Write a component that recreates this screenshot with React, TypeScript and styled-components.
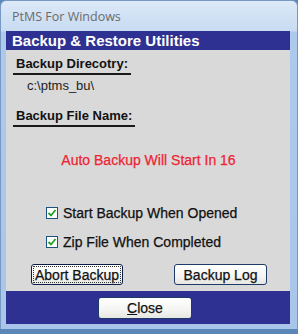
import React from "react";
import styled, { createGlobalStyle } from "styled-components";

const GlobalStyle = createGlobalStyle`
	html, body {
		margin: 0;
		padding: 0;
		background: #5a87b8;
	}
	* {
		box-sizing: border-box;
	}
`;

const Window = styled.div`
	width: 298px;
	height: 329px;
	display: flex;
	flex-direction: column;
	border: 1px solid #7897c2;
	border-bottom: none;
	border-radius: 6px 6px 0 0;
	background: linear-gradient(to bottom, #dce9f8 0px, #c7dbf2 30px, #adc9ec 31px, #a9c6ea 100%);
	overflow: hidden;
	font-family: "Liberation Sans", Arial, sans-serif;
`;

const TitleBar = styled.div`
	height: 30px;
	display: flex;
	align-items: center;
	padding-left: 11px;
	font-family: "Open Sans", "Liberation Sans", sans-serif;
	font-size: 12.5px;
	color: #6b6b6b;
`;

const Client = styled.div`
	flex: 1;
	display: flex;
	flex-direction: column;
	margin: 0 7px 5px 5px;
`;

const Header = styled.div`
	height: 19px;
	background: #2e3192;
	color: #fff;
	font-weight: bold;
	font-size: 15px;
	line-height: 19px;
	padding-left: 6px;
`;

const Body = styled.div`
	height: 241px;
	background: #d9d9d9;
	padding: 6px 0 0 7px;
	display: flex;
	flex-direction: column;
`;

const SectionLabel = styled.div<{ $gap: number }>`
	align-self: flex-start;
	font-size: 13px;
	font-weight: bold;
	line-height: 15px;
	color: #111;
	padding: 0 3px 2px 3px;
	border-bottom: 2px solid #1a1a1a;
	margin-top: ${(p) => p.$gap}px;
`;

const PathText = styled.div`
	font-size: 13px;
	line-height: 15px;
	color: #222;
	padding-left: 14px;
	margin-top: 3px;
`;

const Countdown = styled.div`
	margin-top: 25px;
	text-align: center;
	padding-right: 6px;
	font-size: 14px;
	line-height: 16px;
	color: #ee2433;
	-webkit-text-stroke: 0.25px #ee2433;
`;

const Options = styled.div`
	display: flex;
	flex-direction: column;
	gap: 13px;
	margin-top: 37px;
	padding-left: 33px;
`;

const Option = styled.label`
	display: flex;
	align-items: center;
	gap: 5px;
	font-size: 14px;
	line-height: 16px;
	color: #111;
	-webkit-text-stroke: 0.25px #111;
`;

const Box = styled.span`
	width: 12px;
	height: 12px;
	border: 1px solid #1c5180;
	background: #fff;
	display: flex;
	align-items: center;
	justify-content: center;
`;

const ButtonRow = styled.div`
	display: flex;
	justify-content: space-between;
	margin-top: 14px;
	padding: 0 23px 0 18px;
`;

const Button = styled.button<{ $focused?: boolean; $w: number; $h: number }>`
	width: ${(p) => p.$w}px;
	height: ${(p) => p.$h}px;
	padding: 0;
	border: 1px solid ${(p) => (p.$focused ? "#0c1d4a" : "#1d3b66")};
	border-radius: 3px;
	background: linear-gradient(to bottom, #ffffff 0%, #f4f4f2 60%, #e6e6e2 100%);
	font-family: "Liberation Sans", Arial, sans-serif;
	font-size: 14px;
	color: #111;
	-webkit-text-stroke: 0.25px #111;
	outline: ${(p) => (p.$focused ? "1px dotted #333" : "none")};
	outline-offset: -3px;
	u {
		text-decoration: underline;
	}
`;

const Footer = styled.div`
	flex: 1;
	background: #2e3192;
	display: flex;
	align-items: center;
	padding-left: 92px;
`;

const Check = () => (
	<svg width="10" height="10" viewBox="0 0 10 10">
		<path d="M1.5 5 L4 7.5 L8.5 2" fill="none" stroke="#21a121" strokeWidth="1.8" />
	</svg>
);

const App = () => {
	return (
		<>
			<GlobalStyle />
			<Window>
				<TitleBar>PtMS For Windows</TitleBar>
				<Client>
					<Header>Backup &amp; Restore Utilities</Header>
					<Body>
						<SectionLabel $gap={0}>Backup Direcotry:</SectionLabel>
						<PathText>c:\ptms_bu\</PathText>
						<SectionLabel $gap={15}>Backup File Name:</SectionLabel>
						<Countdown>Auto Backup Will Start In 16</Countdown>
						<Options>
							<Option>
								<Box>
									<Check />
								</Box>
								Start Backup When Opened
							</Option>
							<Option>
								<Box>
									<Check />
								</Box>
								Zip File When Completed
							</Option>
						</Options>
						<ButtonRow>
							<Button $focused $w={92} $h={21}>
								Abort Backup
							</Button>
							<Button $w={93} $h={21}>
								Backup Log
							</Button>
						</ButtonRow>
					</Body>
					<Footer>
						<Button $w={94} $h={22}>
							<u>C</u>lose
						</Button>
					</Footer>
				</Client>
			</Window>
		</>
	);
};

export default App;
